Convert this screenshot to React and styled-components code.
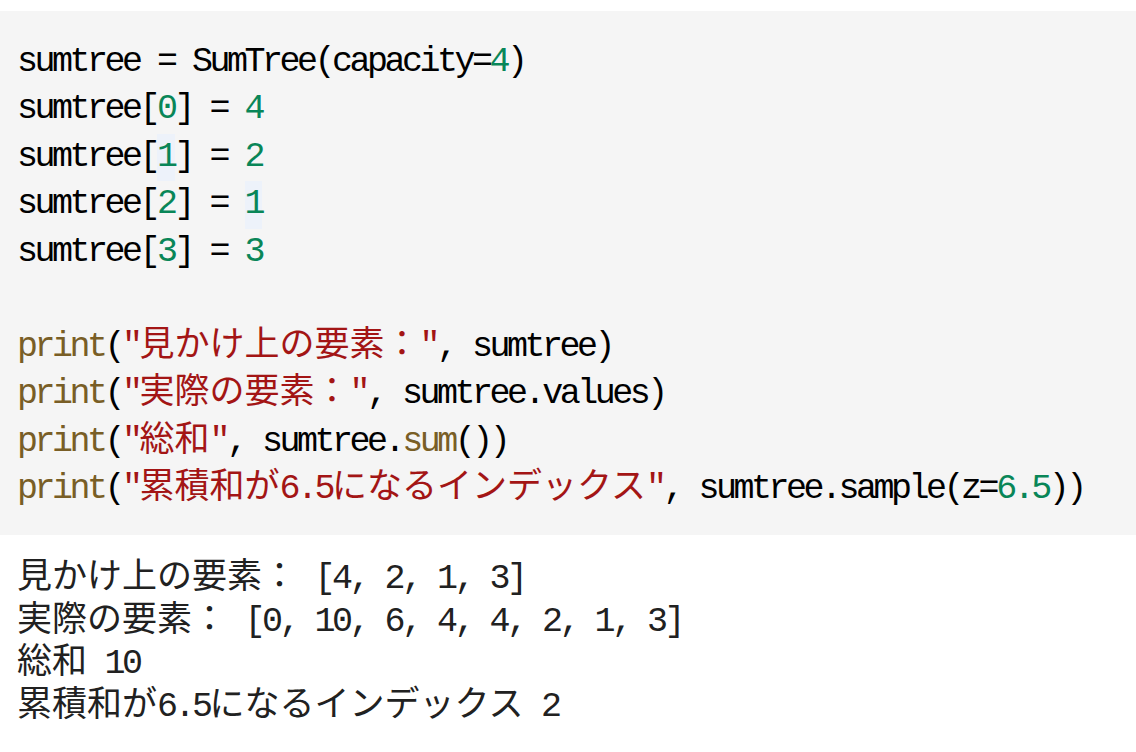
import React from 'react';
import styled, { createGlobalStyle } from 'styled-components';

const GlobalStyle = createGlobalStyle`
  html, body {
    margin: 0;
    padding: 0;
    background: #ffffff;
  }
`;

const Page = styled.div`
  width: 1136px;
  padding-top: 11px;
`;

const CodeBlock = styled.pre`
  margin: 0;
  padding: 28px 17px 22px;
  background: #f5f5f5;
  color: #000000;
  font-family: "Liberation Mono", "Noto Sans CJK JP", monospace;
  font-size: 35px;
  line-height: 47.45px;
  letter-spacing: -3.5px;
  white-space: pre;
`;

const Output = styled.pre`
  margin: 0;
  padding: 23px 17px 0;
  color: #212121;
  font-family: "Liberation Mono", "Noto Sans CJK JP", monospace;
  font-size: 35px;
  line-height: 42.5px;
  letter-spacing: -3.5px;
  white-space: pre;
`;

const Line = styled.div`
  height: ${p => p.$h};
`;

const Tok = styled.span`
  color: ${p =>
    p.$kind === 'fn' ? '#795e26'
    : p.$kind === 'str' ? '#a31515'
    : p.$kind === 'num' ? '#098658'
    : 'inherit'};
  ${p => p.$hl && `
    display: inline-block;
    background: #edf2fa;
  `}
`;

const Jp = styled.span`
  letter-spacing: 0;
`;

const CJK = /([\u3000-\u30ff\u4e00-\u9fff\uff00-\uffef]+)/;

const Txt = ({ text }) =>
  text.split(CJK).map((part, i) =>
    i % 2 === 1 ? <Jp key={i}>{part}</Jp> : part
  );

const code = [
  [['', 'sumtree = SumTree(capacity='], ['num', '4'], ['', ')']],
  [['', 'sumtree['], ['num', '0'], ['', '] = '], ['num', '4']],
  [['', 'sumtree['], ['num', '1', true], ['', '] = '], ['num', '2']],
  [['', 'sumtree['], ['num', '2'], ['', '] = '], ['num', '1', true]],
  [['', 'sumtree['], ['num', '3'], ['', '] = '], ['num', '3']],
  [],
  [['fn', 'print'], ['', '('], ['str', '"見かけ上の要素："'], ['', ', sumtree)']],
  [['fn', 'print'], ['', '('], ['str', '"実際の要素："'], ['', ', sumtree.values)']],
  [['fn', 'print'], ['', '('], ['str', '"総和"'], ['', ', sumtree.'], ['fn', 'sum'], ['', '())']],
  [
    ['fn', 'print'], ['', '('], ['str', '"累積和が6.5になるインデックス"'],
    ['', ', sumtree.sample(z='], ['num', '6.5'], ['', '))'],
  ],
];

const output = [
  '見かけ上の要素： [4, 2, 1, 3]',
  '実際の要素： [0, 10, 6, 4, 4, 2, 1, 3]',
  '総和 10',
  '累積和が6.5になるインデックス 2',
];

export default function App() {
  return (
    <Page>
      <GlobalStyle />
      <CodeBlock>
        {code.map((tokens, i) => (
          <Line key={i} $h="47.45px">
            {tokens.map(([kind, text, hl], j) => (
              <Tok key={j} $kind={kind} $hl={hl}>
                <Txt text={text} />
              </Tok>
            ))}
          </Line>
        ))}
      </CodeBlock>
      <Output>
        {output.map((text, i) => (
          <Line key={i} $h="42.5px">
            <Txt text={text} />
          </Line>
        ))}
      </Output>
    </Page>
  );
}
